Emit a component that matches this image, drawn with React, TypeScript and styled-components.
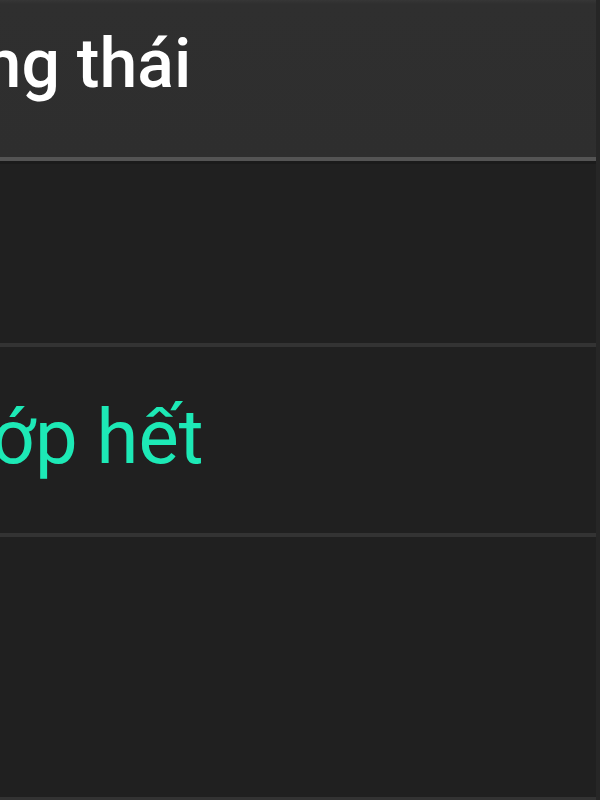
import React from 'react';
import styled, { createGlobalStyle } from 'styled-components';

const GlobalStyle = createGlobalStyle`
    html, body {
        margin: 0;
        padding: 0;
        background: #202020;
        overflow: hidden;
    }
`;

const Table = styled.div`
    width: 600px;
    height: 800px;
    display: flex;
    flex-direction: column;
    font-family: Roboto, 'Noto Sans', sans-serif;
    background: #202020;
    border-right: 4px solid #262626;
    box-sizing: border-box;
    overflow: hidden;
`;

const HeaderRow = styled.div`
    height: 157px;
    flex: none;
    display: flex;
    align-items: flex-start;
    background: linear-gradient(#363636 0, #2f2f2f 4px, #2e2e2e 100%);
    border-bottom: 4px solid #545454;
    box-shadow: 0 3px 0 #1b1b1b;
`;

const Row = styled.div<{ height: number }>`
    height: ${(props) => props.height}px;
    flex: none;
    display: flex;
    align-items: flex-start;
    border-bottom: 4px solid #333333;
`;

const HeaderCell = styled.div`
    margin: 30px 0 0 -115px;
    font-size: 68px;
    font-weight: 500;
    line-height: 1;
    white-space: nowrap;
    color: #ffffff;
`;

const StatusCell = styled.div<{ color: string }>`
    margin: 52px 0 0 -200px;
    font-size: 76px;
    line-height: 1;
    white-space: nowrap;
    color: ${(props) => props.color};
`;

const App = () => (
    <>
        <GlobalStyle />
        <Table>
            <HeaderRow>
                <HeaderCell>Trạng thái</HeaderCell>
            </HeaderRow>
            <Row height={182} />
            <Row height={186}>
                <StatusCell color="#1de9b6">Đã khớp hết</StatusCell>
            </Row>
            <Row height={260} />
        </Table>
    </>
);

export default App;
